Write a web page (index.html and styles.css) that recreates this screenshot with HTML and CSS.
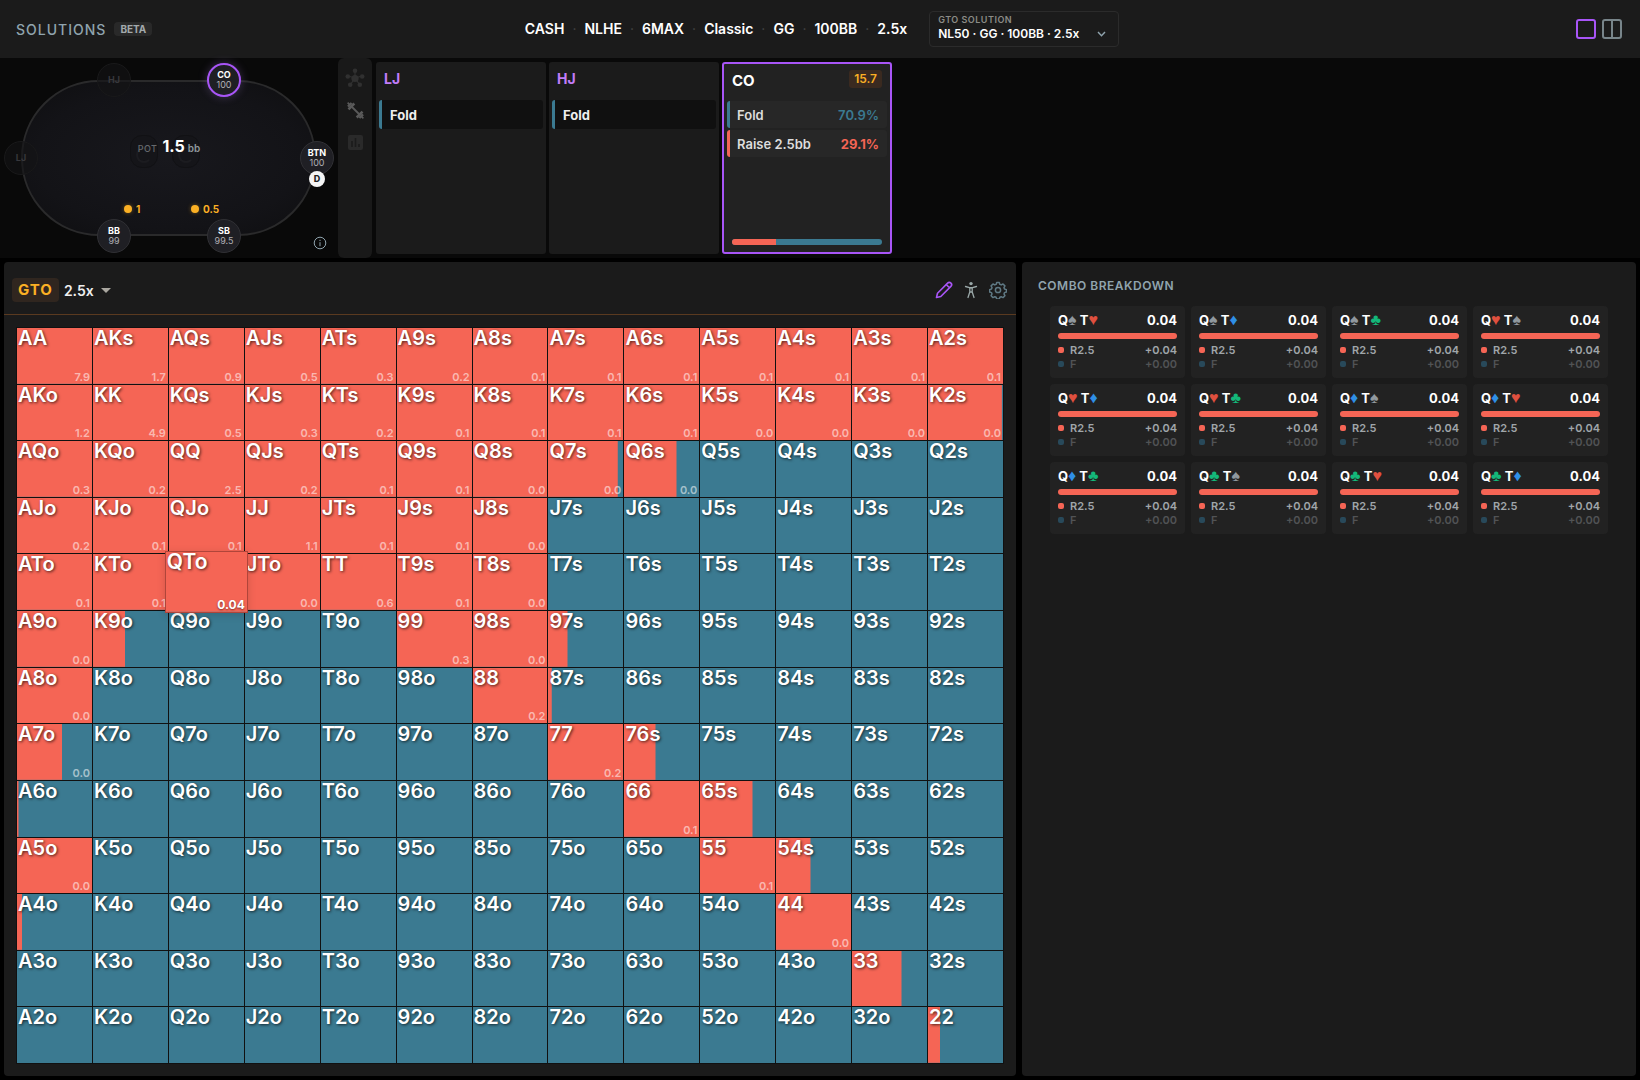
FILE: index.html
```html
<!DOCTYPE html>
<html lang="en">
<head>
  <meta charset="UTF-8" />
  <meta name="viewport" content="width=device-width, initial-scale=1" />
  <title>Solutions</title>
  <link rel="stylesheet" href="styles.css">
</head>
<body>
  <header class="topbar">
    <div class="brand">
      <h1>SOLUTIONS</h1>
      <span class="beta">BETA</span>
    </div>
    <div class="topbar-center">
      <nav class="crumbs">
        <a href="#">CASH</a><i>·</i>
        <a href="#">NLHE</a><i>·</i>
        <a href="#">6MAX</a><i>·</i>
        <a href="#">Classic</a><i>·</i>
        <a href="#">GG</a><i>·</i>
        <a href="#">100BB</a><i>·</i>
        <a href="#">2.5x</a>
      </nav>
      <div class="solution">
        <label for="solution">GTO SOLUTION</label>
        <div class="solution-value">
          <select id="solution">
            <option>NL50 · GG · 100BB · 2.5x</option>
          </select>
          <svg width="9" height="6" viewBox="0 0 9 6"><path d="M1 1l3.500 3.800L8 1" fill="none" stroke="#90a4ae" stroke-width="1.400"/></svg>
        </div>
      </div>
    </div>
    <div class="views">
      <button class="view active" aria-label="Single view"></button>
      <button class="view split" aria-label="Split view"></button>
    </div>
  </header>

  <section class="spot">
    <div class="table-area">
      <div class="felt"></div>
      <div class="ghost ghost-left"></div>
      <div class="ghost ghost-right"></div>
      <div class="pot"><span>POT</span><b>1.5</b><em>bb</em></div>
      <div class="seat folded seat-hj"><b>HJ</b></div>
      <div class="seat acting seat-co"><b>CO</b><span>100</span></div>
      <div class="seat folded seat-lj"><b>LJ</b></div>
      <div class="seat seat-btn"><b>BTN</b><span>100</span></div>
      <div class="seat seat-bb"><b>BB</b><span>99</span></div>
      <div class="seat seat-sb"><b>SB</b><span>99.5</span></div>
      <div class="dealer">D</div>
      <div class="bet bet-bb">1</div>
      <div class="bet bet-sb">0.5</div>
      <button class="info" aria-label="Table info">
        <svg width="14" height="14" viewBox="0 0 14 14" fill="none" stroke="#90a4ae"><circle cx="7" cy="7" r="5.8"/><path d="M7 6.2v4M7 3.8v1.2"/></svg>
      </button>
    </div>

    <div class="tools">
      <button aria-label="Nodes">
        <svg width="20" height="20" viewBox="0 0 20 20" fill="#303030" stroke="#303030"><path d="M10 10V3M10 10l7-2M10 10l4.500 6.500M10 10l-4.500 6.500M10 10 3 8" stroke-width="1.200"/><g stroke="none"><circle cx="10" cy="10.500" r="3.600"/><circle cx="10" cy="2.800" r="2.300"/><circle cx="17.200" cy="8.500" r="2.300"/><circle cx="14.800" cy="16.700" r="2.300"/><circle cx="5.200" cy="16.700" r="2.300"/><circle cx="2.800" cy="8.500" r="2.300"/></g></svg>
      </button>
      <button aria-label="Practice">
        <svg width="20" height="20" viewBox="0 0 20 20" stroke="#5a5a5a" fill="none"><path d="m6 6 9 9" stroke-width="1.800"/><path d="m3.500 9.300 5.800-5.800M11.700 17.500l5.800-5.800" stroke-width="2.600"/><path d="m3 6.600 3.600-3.600M14.400 18l3.600-3.600" stroke-width="2.400"/><path d="m2.600 2.600 2 2M16.400 16.400l2 2" stroke-width="1.600"/></svg>
      </button>
      <button aria-label="Reports">
        <svg width="20" height="20" viewBox="0 0 20 20"><rect x="3" y="3" width="15" height="15" rx="2" fill="#2a2a2a"/><path d="M7 9v6M10.500 6v9M14 12v3" stroke="#1b1b1b" stroke-width="1.600"/></svg>
      </button>
    </div>

    <div class="nodes">
      <article class="node">
        <h2>LJ</h2>
        <button class="action fold">Fold</button>
      </article>
      <article class="node">
        <h2>HJ</h2>
        <button class="action fold">Fold</button>
      </article>
      <article class="node current">
        <div class="node-head"><h2>CO</h2><span class="ev">15.7</span></div>
        <button class="action fold">Fold<b>70.9%</b></button>
        <button class="action raise">Raise 2.5bb<b>29.1%</b></button>
        <div class="split-bar"><div style="width: 29.1%"></div></div>
      </article>
    </div>
  </section>

  <main class="panels">
    <section class="panel range">
      <div class="range-head">
        <span class="gto">GTO</span>
        <div class="size-pick">
          <select aria-label="Raise size"><option>2.5x</option></select>
          <svg width="10" height="5" viewBox="0 0 10 5"><path d="M0 0h10L5 5z" fill="#aaa7a0"/></svg>
        </div>
        <div class="range-tools">
          <button aria-label="Edit">
            <svg width="18" height="18" viewBox="0 0 18 18" fill="none" stroke="#a855f7" stroke-width="1.600" stroke-linejoin="round"><path d="M1.500 16.500l1-4.300L12.600 2.100a2.300 2.300 0 0 1 3.300 3.300L5.800 15.500zM11.200 3.500l3.300 3.300"/></svg>
          </button>
          <button aria-label="Player">
            <svg width="18" height="18" viewBox="0 0 18 18" fill="none" stroke="#9aa8a8" stroke-width="1.300" stroke-linecap="round" stroke-linejoin="round"><circle cx="9" cy="2.600" r="1.700" fill="#9aa8a8" stroke="none"/><path d="M3.500 5.500L7.500 6.600h3L14.500 5.500"/><path d="M7.800 6.800h2.400v4.200l1.800 5.500M7.800 6.800V11L6 16.500M7.800 11h2.400"/></svg>
          </button>
          <button aria-label="Settings">
            <svg width="18" height="18" viewBox="0 0 18 18" fill="none" stroke="#5f7984" stroke-width="1.500" stroke-linejoin="round"><circle cx="9" cy="9" r="2.600"/><path d="M7.700 1.500h2.600l.6 1.900 1.300.5 1.800-.9 1.900 1.900-.9 1.800.5 1.300 1.900.6v2.400l-1.900.6-.5 1.300.9 1.800-1.900 1.900-1.800-.9-1.300.5-.6 1.700H7.700l-.6-1.700-1.300-.5-1.800.9-1.900-1.900.9-1.800-.5-1.300-1.900-.6V8.600L2.500 8 3 6.700l-.9-1.800L4 3l1.800.9 1.300-.5z"/></svg>
          </button>
        </div>
      </div>
      <div class="matrix" id="matrix"></div>
    </section>

    <section class="panel combos">
      <h2>COMBO BREAKDOWN</h2>
      <div class="combo-grid" id="combos"></div>
    </section>
  </main>

  <script src="script.js"></script>
</body>
</html>
```
FILE: styles.css
```css
* {
  box-sizing: border-box;
}

:root {
  --raise: #f56555;
  --fold: #3b7a91;
  --purple: #a855f7;
  --gold: #fbb024;
  --panel: #1b1b1b;
}

body {
  margin: 0;
  height: 100vh;
  display: flex;
  flex-direction: column;
  background: #000;
  color: #fff;
  font-family: Inter, "Liberation Sans", sans-serif;
}

h1,
h2 {
  margin: 0;
}

button,
select {
  border: 0;
  margin: 0;
  padding: 0;
  background: none;
  color: inherit;
  font: inherit;
  cursor: pointer;
}

select {
  appearance: none;
}

option {
  background: var(--panel);
}

svg {
  display: block;
}

/* top bar */
.topbar {
  height: 58px;
  flex: none;
  padding: 0 12px 0 16px;
  display: grid;
  grid-template-columns: 1fr auto 1fr;
  align-items: center;
  background: var(--panel);
}

.brand {
  display: flex;
  align-items: center;
  gap: 8px;
}

.brand h1 {
  font-size: 14px;
  font-weight: 500;
  letter-spacing: 1px;
  color: #90a4ae;
}

.beta {
  padding: 0 6px;
  border-radius: 4px;
  background: #292929;
  color: #a3a9ac;
  font-size: 10px;
  font-weight: 700;
  line-height: 14px;
}

.topbar-center {
  display: flex;
  align-items: center;
  gap: 22px;
}

.crumbs {
  display: flex;
  align-items: center;
  gap: 8px;
  padding-bottom: 2px;
  font-size: 14px;
  font-weight: 600;
}

.crumbs a {
  color: #fff;
  text-decoration: none;
}

.crumbs i {
  color: #444;
  font-style: normal;
  font-weight: 400;
}

.solution {
  width: 190px;
  height: 36px;
  padding: 2px 12px 0 8px;
  border: 1px solid #2b2b2b;
  border-radius: 4px;
}

.solution label {
  display: block;
  color: #8b8b86;
  font-size: 9px;
  font-weight: 600;
  line-height: 12px;
  letter-spacing: 0.5px;
}

.solution-value,
.size-pick {
  display: flex;
  align-items: center;
}

.solution select {
  flex: 1;
  min-width: 0;
  font-size: 12px;
  font-weight: 600;
  line-height: 16px;
}

.views {
  display: flex;
  gap: 6px;
  justify-content: flex-end;
  padding-right: 6px;
}

.view {
  width: 20px;
  height: 20px;
  border: 2px solid #78858a;
  border-radius: 3px;
}

.view.active {
  border-color: var(--purple);
}

.view.split {
  background: linear-gradient(#78858a, #78858a) center / 2px 100% no-repeat;
}

/* table and action nodes */
.spot {
  height: 200px;
  flex: none;
  display: flex;
  background: #090909;
}

.table-area {
  position: relative;
  width: 338px;
  flex: none;
}

.felt {
  position: absolute;
  left: 21px;
  top: 22px;
  width: 295px;
  height: 156px;
  border: 2px solid #2a2a2b;
  border-radius: 78px;
  background: radial-gradient(ellipse at center, #18181d, #131317 65%, #0e0e10);
}

.seat {
  position: absolute;
  width: 34px;
  height: 34px;
  display: flex;
  flex-direction: column;
  align-items: center;
  justify-content: center;
  border: 1px solid #303034;
  border-radius: 50%;
  background: #1f1f24;
  font-size: 9px;
  line-height: 10px;
}

.seat b {
  font-weight: 700;
}

.seat span {
  color: #b0b0b4;
}

.seat.folded {
  border-color: #19191a;
  background: rgba(20, 20, 22, 0.6);
  color: #38383c;
}

.seat.acting {
  border: 2px solid var(--purple);
  box-shadow: 0 0 10px rgba(190, 150, 255, 0.25);
}

.seat-hj { left: 97px; top: 5px; }
.seat-co { left: 207px; top: 5px; }
.seat-lj { left: 4px; top: 83px; }
.seat-btn { left: 300px; top: 83px; }
.seat-bb { left: 97px; top: 161px; }
.seat-sb { left: 207px; top: 161px; }

.dealer {
  position: absolute;
  left: 309px;
  top: 113px;
  width: 16px;
  height: 16px;
  border-radius: 50%;
  background: #f5f5f5;
  color: #222;
  font-size: 9px;
  font-weight: 800;
  line-height: 16px;
  text-align: center;
}

.ghost {
  position: absolute;
  top: 77px;
  width: 28px;
  height: 33px;
  border: 1px solid #111114;
  border-radius: 12px;
  background: #151519;
}

.ghost::after {
  content: "";
  display: block;
  width: 12px;
  height: 12px;
  margin: 11px auto 0;
  border: 2px solid #1c1c20;
  border-right-color: transparent;
  border-radius: 50%;
}

.ghost-left { left: 130px; }
.ghost-right { left: 172px; }

.pot {
  position: absolute;
  left: 0;
  right: 0;
  top: 78px;
  display: flex;
  align-items: baseline;
  justify-content: center;
}

.pot span {
  margin-right: 5px;
  color: #66696c;
  font-size: 9px;
  font-weight: 500;
  letter-spacing: 0.5px;
}

.pot b {
  font-size: 16px;
  font-weight: 700;
  line-height: 20px;
}

.pot em {
  margin-left: 3px;
  color: #90989c;
  font-size: 10px;
  font-style: normal;
  font-weight: 600;
}

.bet {
  position: absolute;
  top: 145px;
  display: flex;
  align-items: center;
  gap: 4px;
  color: var(--gold);
  font-size: 10px;
  font-weight: 700;
  line-height: 12px;
}

.bet::before {
  content: "";
  width: 8px;
  height: 8px;
  border-radius: 50%;
  background: var(--gold);
  box-shadow: 0 0 4px rgba(251, 176, 36, 0.4);
}

.bet-bb { left: 124px; }
.bet-sb { left: 191px; }

.info {
  position: absolute;
  left: 313px;
  top: 178px;
}

.tools {
  width: 34px;
  flex: none;
  display: flex;
  flex-direction: column;
  align-items: center;
  gap: 12px;
  padding-top: 10px;
  border-radius: 6px;
  background: #191919;
}

.nodes {
  display: flex;
  gap: 3px;
  padding: 4px;
}

.node {
  width: 170px;
  display: flex;
  flex-direction: column;
  padding: 3px;
  border-radius: 3px;
  background: var(--panel);
}

.node h2 {
  padding: 5px;
  color: #c07cf8;
  font-size: 14px;
  font-weight: 700;
  line-height: 18px;
}

.action {
  display: flex;
  align-items: center;
  justify-content: space-between;
  height: 29px;
  margin-top: 7px;
  padding: 0 8px;
  border-left: 3px solid var(--fold);
  border-radius: 3px;
  background: #101010;
  color: #eee;
  font-size: 13px;
  font-weight: 700;
}

.action b {
  color: var(--fold);
  font-weight: 600;
}

.action.raise {
  border-color: var(--raise);
}

.action.raise b {
  color: var(--raise);
  font-weight: 700;
}

.current {
  border: 2px solid var(--purple);
  background: #222;
}

.current .action {
  height: 27px;
  margin-top: 2px;
  padding-left: 7px;
  background: #272727;
  color: #ddd;
  font-weight: 600;
}

.current .action.fold {
  margin-top: 0;
}

.node-head {
  display: flex;
  justify-content: space-between;
  padding: 3px 5px;
  height: 34px;
}

.current h2 {
  padding: 2px 0;
  color: #fff;
  font-size: 15px;
}

.ev {
  height: 18px;
  padding: 0 5px;
  border-radius: 3px;
  background: #3a2a20;
  color: var(--gold);
  font-size: 12px;
  font-weight: 600;
  line-height: 18px;
}

.split-bar {
  height: 6px;
  margin: auto 5px 4px;
  overflow: hidden;
  border-radius: 3px;
  background: var(--fold);
}

.split-bar div {
  height: 100%;
  background: var(--raise);
}

/* main panels */
.panels {
  flex: 1;
  min-height: 0;
  display: grid;
  grid-template-columns: 1012fr 614fr;
  gap: 6px;
  padding: 4px;
}

.panel {
  border-radius: 4px;
  background: var(--panel);
}

.range {
  display: flex;
  flex-direction: column;
}

.range-head {
  height: 53px;
  flex: none;
  display: flex;
  align-items: center;
  gap: 5px;
  padding: 4px 9px 0 8px;
  border-bottom: 1px solid #5a3a20;
}

.gto {
  padding: 0 6px;
  border-radius: 4px;
  background: #30261f;
  color: var(--gold);
  font-size: 15px;
  font-weight: 700;
  letter-spacing: 1px;
  line-height: 24px;
}

.size-pick {
  gap: 6px;
  color: #eee;
}

.size-pick select {
  width: 31px;
  font-size: 14px;
  font-weight: 600;
}

.range-tools {
  display: flex;
  gap: 9px;
  margin-left: auto;
}

.matrix {
  flex: 1;
  min-height: 0;
  display: grid;
  grid-template: repeat(13, minmax(0, 1fr)) / repeat(13, minmax(0, 1fr));
  gap: 1px;
  margin: 12px;
  padding: 1px;
  background: #111;
}

.cell {
  display: flex;
  flex-direction: column;
  justify-content: space-between;
  padding: 0 2px 0 1px;
  background: linear-gradient(var(--raise), var(--raise)) left / var(--freq) 100% no-repeat var(--fold);
  text-align: left;
}

.hand {
  font-size: 20px;
  font-weight: 600;
  line-height: 20px;
  text-shadow: 1px 1px 3px rgba(0, 0, 0, 0.7);
}

.cell-ev {
  align-self: flex-end;
  color: rgba(255, 255, 255, 0.55);
  font-size: 11px;
  font-weight: 600;
  line-height: 14px;
}

.cell.selected {
  z-index: 1;
  margin: -3px -4px;
  border: 1px solid #b0453a;
  box-shadow: 0 2px 8px rgba(0, 0, 0, 0.15);
}

.selected .hand {
  font-size: 21px;
}

.selected .cell-ev {
  color: #fff;
  font-size: 12px;
  font-weight: 700;
  text-shadow: 0 1px 2px rgba(0, 0, 0, 0.5);
}

/* combo breakdown */
.combos h2 {
  padding: 16px 16px 13px;
  color: #90a4ae;
  font-size: 12px;
  font-weight: 600;
  letter-spacing: 0.5px;
  line-height: 15px;
}

.combo-grid {
  display: grid;
  grid-template-columns: repeat(4, 1fr);
  gap: 6px;
  padding: 0 28px;
}

.combo {
  height: 72px;
  padding: 6px 8px;
  border-radius: 4px;
  background: #222;
}

.combo-head,
.combo-row {
  display: flex;
  align-items: center;
}

.combo-head {
  justify-content: space-between;
  height: 17px;
  font-size: 13px;
  font-weight: 700;
  line-height: 17px;
}

.combo-head i {
  font-family: "Liberation Sans", sans-serif;
  font-size: 16px;
  font-style: normal;
  font-weight: 400;
  line-height: 15px;
}

.s { color: #90989e; }
.h { color: #e0503f; }
.d { color: #2f8fe6; }
.c { color: #14b87a; }

.combo-bar {
  height: 6px;
  margin: 4px 0;
  border-radius: 3px;
  background: var(--raise);
}

.combo-row {
  color: #a0a6aa;
  font-size: 11px;
  font-weight: 600;
  line-height: 14px;
}

.combo-row::before {
  content: "";
  width: 6px;
  height: 6px;
  margin-right: 6px;
  border-radius: 2px;
  background: var(--raise);
}

.combo-row span:last-child {
  margin-left: auto;
}

.combo-row.off {
  color: #515355;
}

.combo-row.off::before {
  background: #28495a;
}
```
FILE: script.js
```js
const ranks = "AKQJT98765432";

// raise frequency (%) where it is not a pure fold
const freq = {
  K2s: 98.5, Q7s: 93, Q6s: 70, K9o: 43, "97s": 26, "87s": 5, A7o: 60,
  "76s": 42, A6o: 2, "65s": 70, "54s": 46, A4o: 7, "33": 66, "22": 16.5
};

// EV of each raised hand, row by row
const ev = {
  AA: 7.9, AKs: 1.7, AQs: 0.9, AJs: 0.5, ATs: 0.3, A9s: 0.2, A8s: 0.1, A7s: 0.1,
  A6s: 0.1, A5s: 0.1, A4s: 0.1, A3s: 0.1, A2s: 0.1,
  AKo: 1.2, KK: 4.9, KQs: 0.5, KJs: 0.3, KTs: 0.2, K9s: 0.1, K8s: 0.1, K7s: 0.1,
  K6s: 0.1, K5s: 0, K4s: 0, K3s: 0, K2s: 0,
  AQo: 0.3, KQo: 0.2, QQ: 2.5, QJs: 0.2, QTs: 0.1, Q9s: 0.1, Q8s: 0, Q7s: 0, Q6s: 0,
  AJo: 0.2, KJo: 0.1, QJo: 0.1, JJ: 1.1, JTs: 0.1, J9s: 0.1, J8s: 0,
  ATo: 0.1, KTo: 0.1, QTo: 0.04, JTo: 0, TT: 0.6, T9s: 0.1, T8s: 0,
  A9o: 0, "99": 0.3, "98s": 0, A8o: 0, "88": 0.2, A7o: 0, "77": 0.2,
  "66": 0.1, A5o: 0, "55": 0.1, "44": 0
};

const selected = "QTo";

function handName(row, col) {
  if (row === col) return ranks[row] + ranks[row];
  return row < col ? ranks[row] + ranks[col] + "s" : ranks[col] + ranks[row] + "o";
}

let cells = "";
for (let row = 0; row < 13; row++) {
  for (let col = 0; col < 13; col++) {
    const hand = handName(row, col);
    const f = freq[hand] ?? (hand in ev ? 100 : 0);
    const isSelected = hand === selected;
    const value = hand in ev ? `<span class="cell-ev">${ev[hand].toFixed(isSelected ? 2 : 1)}</span>` : "";
    cells += `<button class="cell${isSelected ? " selected" : ""}" style="--freq: ${f}%"><span class="hand">${hand}</span>${value}</button>`;
  }
}
document.getElementById("matrix").innerHTML = cells;

const suits = { s: "♠", h: "♥", d: "♦", c: "♣" };
const combos = ["sh", "sd", "sc", "hs", "hd", "hc", "ds", "dh", "dc", "cs", "ch", "cd"];

document.getElementById("combos").innerHTML = combos.map(([a, b]) => `
  <div class="combo">
    <div class="combo-head">
      <span>Q<i class="${a}">${suits[a]}</i> T<i class="${b}">${suits[b]}</i></span>
      <span>0.04</span>
    </div>
    <div class="combo-bar"></div>
    <div class="combo-row"><span>R2.5</span><span>+0.04</span></div>
    <div class="combo-row off"><span>F</span><span>+0.00</span></div>
  </div>`).join("");
```
